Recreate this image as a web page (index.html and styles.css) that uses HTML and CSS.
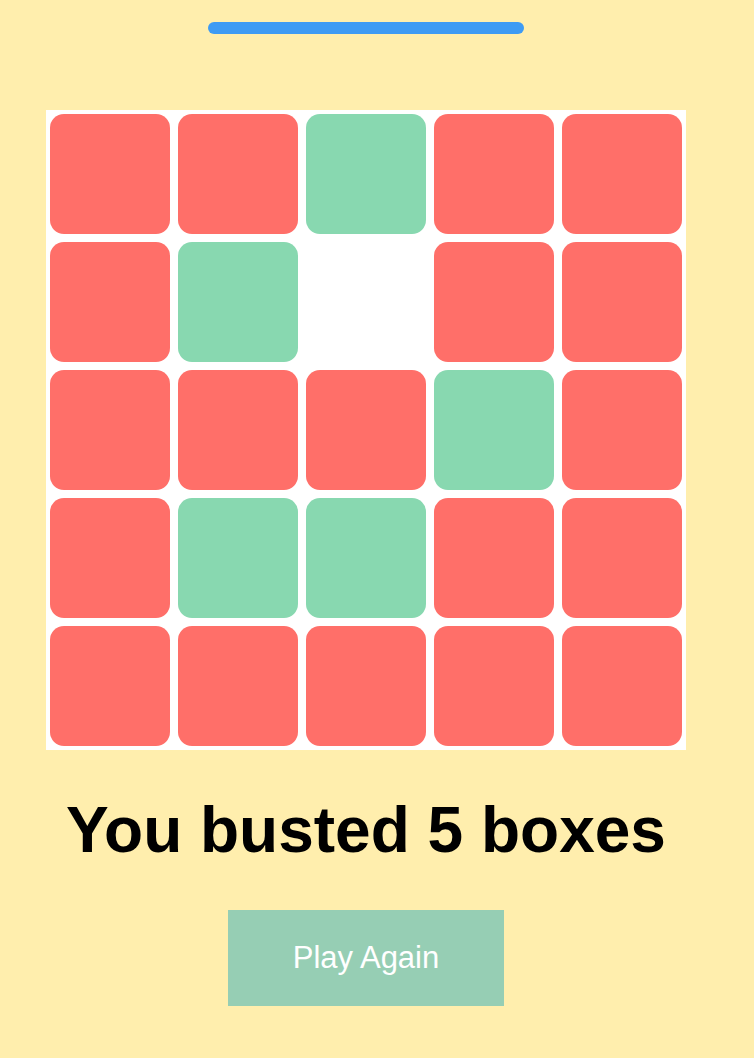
FILE: index.html
```html
<!DOCTYPE html>
<html lang="en">
<head>
  <meta charset="UTF-8">
  <meta name="viewport" content="width=device-width, initial-scale=1.0">
  <title>Box Buster</title>
  <link rel="stylesheet" href="styles.css">
</head>
<body>
  <div class="game">
    <div class="timer-bar"></div>

    <div class="board">
      <div class="box red"></div>
      <div class="box red"></div>
      <div class="box green"></div>
      <div class="box red"></div>
      <div class="box red"></div>

      <div class="box red"></div>
      <div class="box green"></div>
      <div class="box busted"></div>
      <div class="box red"></div>
      <div class="box red"></div>

      <div class="box red"></div>
      <div class="box red"></div>
      <div class="box red"></div>
      <div class="box green"></div>
      <div class="box red"></div>

      <div class="box red"></div>
      <div class="box green"></div>
      <div class="box green"></div>
      <div class="box red"></div>
      <div class="box red"></div>

      <div class="box red"></div>
      <div class="box red"></div>
      <div class="box red"></div>
      <div class="box red"></div>
      <div class="box red"></div>
    </div>

    <h1 class="result">You busted 5 boxes</h1>

    <button type="button" class="play-btn">Play Again</button>
  </div>
</body>
</html>
```

FILE: styles.css
```css
:root {
  --cream: #ffeead;
  --red: #ff6f69;
  --green: #88d8b0;
  --teal: #96ceb4;
  --blue: #3e9bf4;
}

* {
  margin: 0;
  padding: 0;
  box-sizing: border-box;
}

html, body {
  height: 100%;
}

body {
  background-color: var(--cream);
  font-family: "Liberation Sans", Arial, Helvetica, sans-serif;
  color: #000;
}

.game {
  width: 732px;
  display: flex;
  flex-direction: column;
  align-items: center;
  padding-top: 22px;
}

.timer-bar {
  width: 316px;
  height: 12px;
  border-radius: 6px;
  background-color: var(--blue);
  margin-bottom: 76px;
}

.board {
  display: grid;
  grid-template-columns: repeat(5, 120px);
  grid-auto-rows: 120px;
  gap: 8px;
  padding: 4px;
  background-color: #fff;
}

.box {
  border-radius: 14px;
}

.box.red {
  background-color: var(--red);
}

.box.green {
  background-color: var(--green);
}

.box.busted {
  background-color: transparent;
}

.result {
  margin-top: 48px;
  font-size: 64px;
  line-height: 1;
  font-weight: bold;
}

.play-btn {
  margin-top: 48px;
  width: 276px;
  height: 96px;
  border: none;
  background-color: var(--teal);
  color: #fff;
  font-family: "Liberation Sans", Arial, Helvetica, sans-serif;
  font-size: 31px;
  cursor: pointer;
}
```
